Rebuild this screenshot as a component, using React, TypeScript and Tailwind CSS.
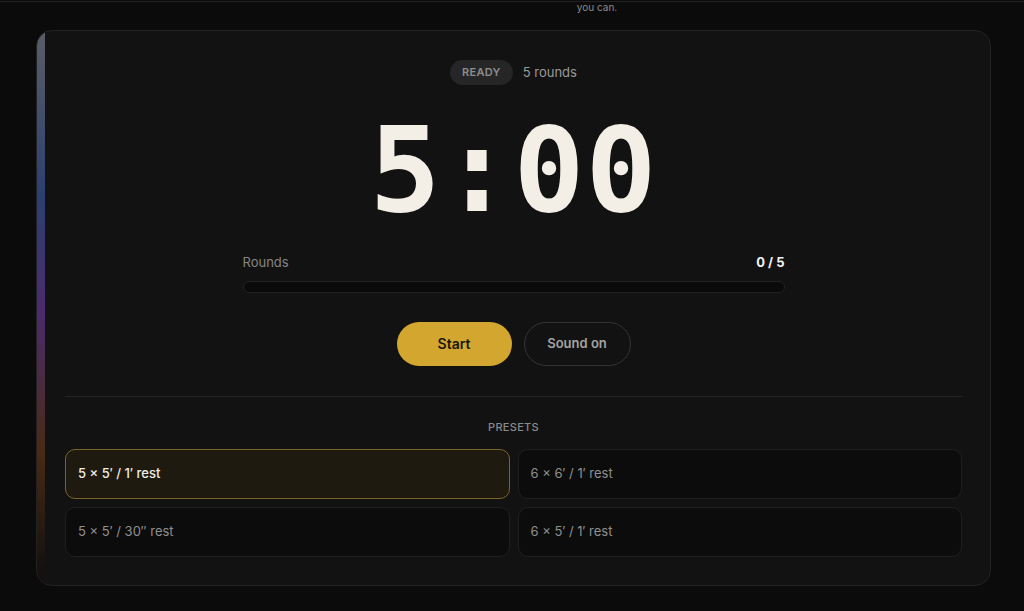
import React from "react";

const presets = [
  { label: "5 × 5′ / 1′ rest", active: true },
  { label: "6 × 6′ / 1′ rest", active: false },
  { label: "5 × 5′ / 30″ rest", active: false },
  { label: "6 × 5′ / 1′ rest", active: false },
];

export default function App() {
  return (
    <div
      className="min-h-[611px] bg-[#0b0b0b] text-[#eee] overflow-hidden"
      style={{ fontFamily: "Inter, 'Noto Sans', sans-serif" }}
    >
      {/* top strip from the section above */}
      <div className="border-t border-[#222] mt-px h-[29px] flex justify-center">
        <span className="text-[10px] leading-[10px] text-[#8a8a8a] pl-[170px]">you can.</span>
      </div>

      <div className="ml-9 w-[955px] h-[556px] rounded-2xl border border-[#222] bg-[#121212] overflow-hidden flex">
        {/* left gradient rail */}
        <div className="w-2 shrink-0 bg-[linear-gradient(to_bottom,#5a5d66,#2b3f70_30%,#4b2b6e_50%,#4a2a14_76%,#141110_97%)]" />

        <div className="flex-1 pl-5 pr-7 pt-[29px] flex flex-col items-center">
          <div className="flex items-center gap-[10px]">
            <span className="h-[25px] px-3 rounded-full bg-[#262626] text-[#8c8c8c] text-[11px] font-semibold tracking-wide flex items-center">
              READY
            </span>
            <span className="text-[13px] text-[#9a9a9a]">5 rounds</span>
          </div>

          <div
            className="mt-[26px] h-[124px] text-[118px] leading-none font-bold text-[#f3efe7] tracking-[1px]"
            style={{ fontFamily: "'DejaVu Sans Mono', monospace" }}
          >
            5:00
          </div>

          <div className="mt-[18px] w-[542px]">
            <div className="flex justify-between items-center text-[13px]">
              <span className="text-[#858585]">Rounds</span>
              <span className="font-bold text-[#f2f2f2]">0 / 5</span>
            </div>
            <div className="mt-[8px] h-[12px] rounded-full bg-[#0a0a0a] border border-[#222]" />
          </div>

          <div className="mt-[29px] flex gap-3">
            <button className="w-[115px] h-[44px] rounded-full bg-[#d3a62f] text-[#1a1608] text-[14px] font-semibold">
              Start
            </button>
            <button className="w-[107px] h-[44px] rounded-full border border-[#333] text-[#a3a3a3] text-[13px] font-semibold">
              Sound on
            </button>
          </div>

          <div className="mt-[30px] w-full border-t border-[#242424]" />

          <div className="mt-[22px] text-[11px] tracking-wide text-[#8a8a8a] font-medium">PRESETS</div>

          <div className="mt-[14px] w-full grid grid-cols-2 gap-2">
            {presets.map((p) => (
              <div
                key={p.label}
                className={
                  p.active
                    ? "h-[50px] rounded-[10px] border border-[#7a6427] bg-[#1e1a0f] flex items-center px-3 text-[13px] font-medium text-[#f0ece2]"
                    : "h-[50px] rounded-[10px] border border-[#1f1f1f] bg-[#0c0c0c] flex items-center px-3 text-[13px] text-[#8f8f8f]"
                }
              >
                {p.label}
              </div>
            ))}
          </div>
        </div>
      </div>
    </div>
  );
}
